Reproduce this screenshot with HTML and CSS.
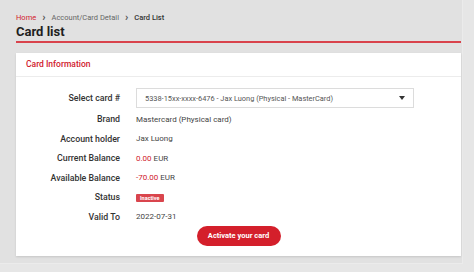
FILE: index.html
```html
<!DOCTYPE html>
<html lang="en">
<head>
  <meta charset="UTF-8">
  <meta name="viewport" content="width=device-width,initial-scale=1"/>
  <title>Card list</title>
  <link rel="stylesheet" href="styles.css">
</head>
<body>
  <div class="pagina">
    <div class="contenido">
      <nav class="migas">
        <a href="#">Home</a>
        <span class="sep">&rsaquo;</span>
        <span>Account/Card Detail</span>
        <span class="sep">&rsaquo;</span>
        <b>Card List</b>
      </nav>
      <h1>Card list</h1>

      <div class="tarjeta">
        <h2>Card Information</h2>
        <div class="cuerpo">
          <div class="fila fila-select">
            <label>Select card #</label>
            <div class="select">
              <span>5338-15xx-xxxx-6476 - Jax Luong (Physical - MasterCard)</span>
              <svg width="6" height="4" viewBox="0 0 6 4"><path d="M0 0h6L3 4z" fill="#333"/></svg>
            </div>
          </div>
          <div class="fila">
            <label>Brand</label>
            <span>Mastercard (Physical card)</span>
          </div>
          <div class="fila">
            <label>Account holder</label>
            <span>Jax Luong</span>
          </div>
          <div class="fila">
            <label>Current Balance</label>
            <span><em>0.00</em> EUR</span>
          </div>
          <div class="fila">
            <label>Available Balance</label>
            <span><em>-70.00</em> EUR</span>
          </div>
          <div class="fila">
            <label>Status</label>
            <span><i class="estado">Inactive</i></span>
          </div>
          <div class="fila">
            <label>Valid To</label>
            <span>2022-07-31</span>
          </div>
          <div class="acciones">
            <button>Activate your card</button>
          </div>
        </div>
      </div>
    </div>
  </div>
</body>
</html>
```

FILE: styles.css
```css
*{
  margin: 0; padding: 0;
  box-sizing: border-box;
  font-family: Roboto, "Liberation Sans", sans-serif;
}
body{
  background: #e6e6e6;
  width: 474px; height: 272px;
  overflow: hidden;
}
.pagina{
  width: 463px; height: 264px;
  background: #e1e1e1;
  border-right: 1px solid #ebebeb;
  border-bottom: 1px solid #ebebeb;
}
.contenido{
  padding: 12px 1px 0 16px;
}
.migas{
  display: flex;
  align-items: center;
  gap: 6px;
  height: 11px;
  font-size: 7.5px;
  color: #666;
}
.migas a{
  color: #d2232f;
  text-decoration: none;
}
.migas .sep{
  font-size: 11px;
  font-weight: 700;
  line-height: 11px;
  color: #555;
  margin-top: -1px;
}
.migas b{
  color: #333;
  font-weight: 500;
}
h1{
  font-size: 13px;
  font-weight: 700;
  color: #1f1f1f;
  line-height: 15px;
  padding: 1px 0 2px;
  border-bottom: 2px solid #d9434c;
}
.tarjeta{
  margin-top: 10px;
  width: 445px;
  background: #fff;
  box-shadow: 0 1px 2px rgba(0,0,0,0.12);
}
h2{
  font-size: 8.5px;
  font-weight: 500;
  color: #d0202d;
  padding: 0 10px;
  height: 24px;
  line-height: 23px;
  border-bottom: 1px solid #ececec;
}
.cuerpo{
  padding: 11px 0 10px;
}
.fila{
  display: grid;
  grid-template-columns: 104px 1fr;
  column-gap: 16px;
  align-items: center;
  height: 19.5px;
  font-size: 8px;
  color: #444;
}
.fila label{
  text-align: right;
  font-size: 8.8px;
  font-weight: 500;
  color: #333;
}
.fila-select{
  height: 20px;
  margin-bottom: 1.5px;
}
.select{
  width: 278px;
  height: 20px;
  border: 1px solid #dcdcdc;
  display: flex;
  align-items: center;
  justify-content: space-between;
  padding: 0 8px 0 8px;
  font-size: 7.4px;
  color: #555;
}
em{
  font-style: normal;
  color: #d0202d;
}
.estado{
  display: inline-block;
  font-style: normal;
  background: #d9454d;
  color: #fff;
  font-size: 5.5px;
  font-weight: 700;
  padding: 0 4px;
  line-height: 8px;
  border-radius: 1px;
}
.acciones{
  display: flex;
  justify-content: center;
  margin-top: -1px;
}
button{
  background: #d41f2b;
  color: #fff;
  border: none;
  border-radius: 10px;
  height: 20px;
  width: 84px;
  font-size: 7.5px;
  font-weight: 700;
}
```
